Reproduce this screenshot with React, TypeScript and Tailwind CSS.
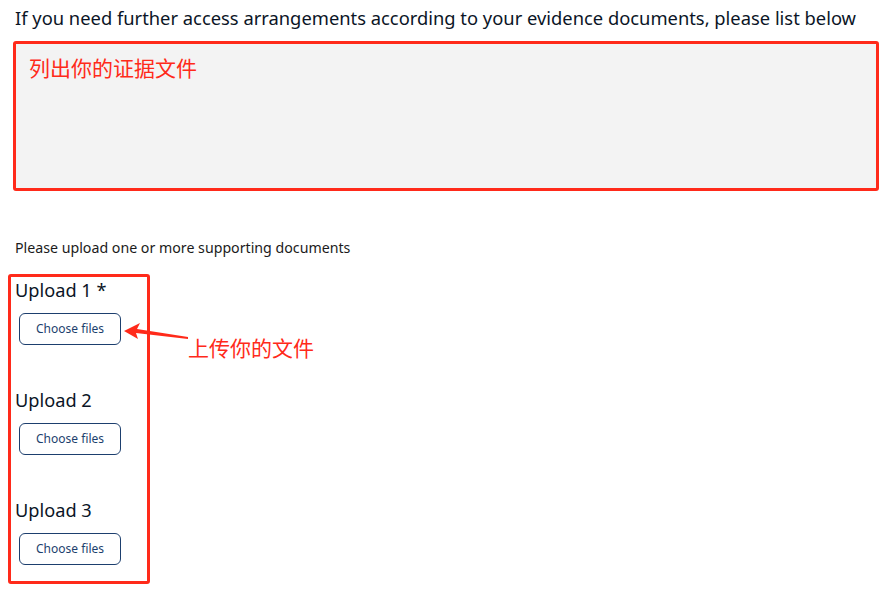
import React from "react";

const UploadField = ({ label }: { label: string }) => {
  return (
    <div className="flex flex-col h-[110px]">
      <span className="text-[18.2px] leading-[26px] text-[#0b1526]">{label}</span>
      <button className="mt-[10px] ml-[4px] w-[102px] h-[32px] border border-[#1d3f6e] rounded-[6px] text-[12px] text-[#1d3f6e] bg-white">
        Choose files
      </button>
    </div>
  );
};

const App = () => {
  return (
    <div className="w-[881px] h-[597px] bg-white font-['Noto_Sans','Noto_Sans_CJK_SC',sans-serif] overflow-hidden">
      <p className="pl-[15px] pt-[5px] text-[18.35px] leading-[26px] text-[#0b1526]">
        If you need further access arrangements according to your evidence documents, please list below
      </p>
      <div className="ml-[13px] mr-[2px] mt-[10px] h-[150px] border-[3px] border-[#ff2a1a] rounded-[3px] bg-[#f3f3f3] px-[13px] pt-[10px]">
        <span className="text-[21px] leading-[28px] text-[#ff2a1a]">列出你的证据文件</span>
      </div>
      <p className="pl-[15px] mt-[47px] text-[14.2px] leading-[20px] text-[#1b1b1b]">
        Please upload one or more supporting documents
      </p>
      <div className="relative mt-[16px] ml-[8px]">
        <div className="w-[142px] h-[310px] border-[3px] border-[#ff2a1a] rounded-[3px] pl-[4px] pt-[0px]">
          <UploadField label="Upload 1 *" />
          <UploadField label="Upload 2" />
          <UploadField label="Upload 3" />
        </div>
        <svg className="absolute left-[112px] top-[44px]" width="70" height="24" viewBox="0 0 70 24">
          <polygon points="4,13 20,5 17,11 68,19 68,21 16,15 18,21" fill="#ff2a1a" />
        </svg>
        <span className="absolute left-[180px] top-[60px] text-[21px] leading-[28px] text-[#ff2a1a]">
          上传你的文件
        </span>
      </div>
    </div>
  );
};

export default App;
